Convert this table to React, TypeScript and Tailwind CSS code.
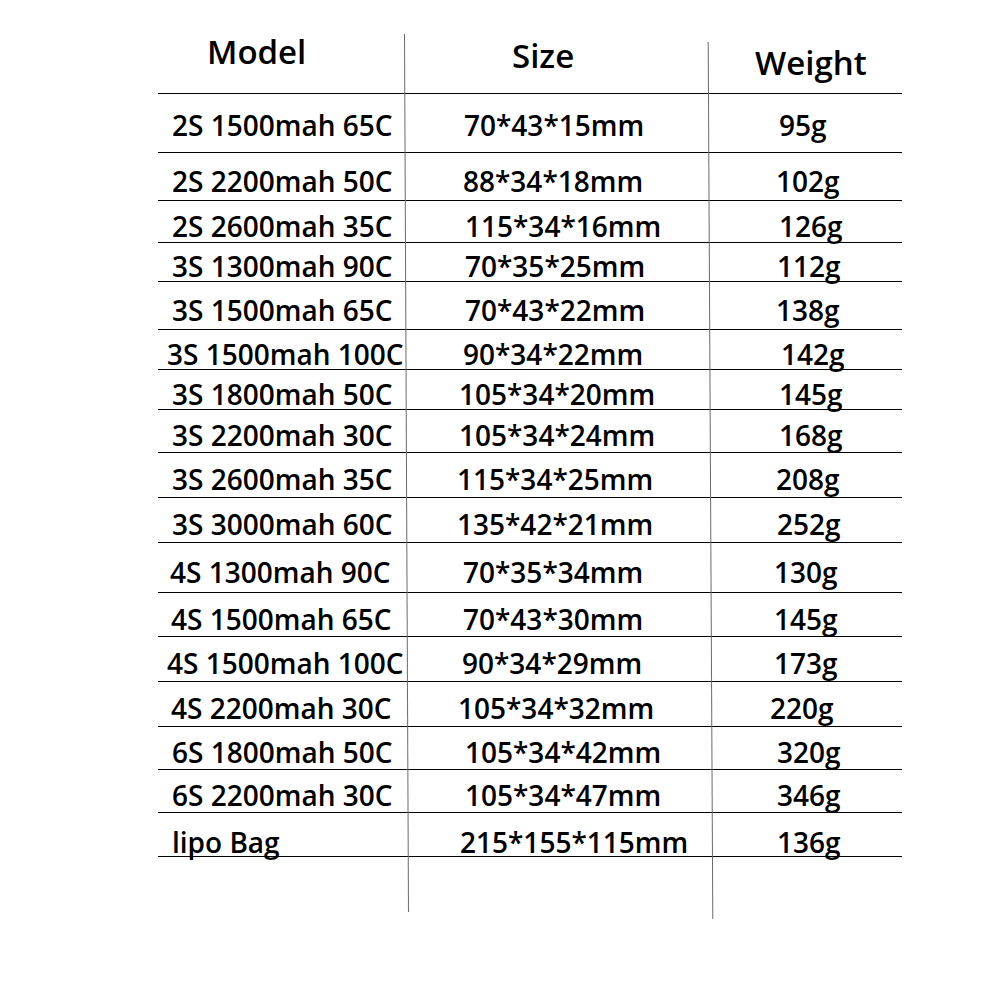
import React from 'react';

type Row = {
  model: string;
  size: string;
  weight: string;
  h: string;
  m?: string;
  s?: string;
  w?: string;
  y?: string;
};

// row heights follow the uneven ruling of the original sheet
const rows: Row[] = [
  { model: '2S 1500mah 65C', size: '70*43*15mm', weight: '95g', h: 'h-[59px]', s: 'pl-[58px]', w: 'pl-[69px]', y: 'pt-[4px]' },
  { model: '2S 2200mah 50C', size: '88*34*18mm', weight: '102g', h: 'h-[48px]', s: 'pl-[57px]', w: 'pl-[66px]' },
  { model: '2S 2600mah 35C', size: '115*34*16mm', weight: '126g', h: 'h-[42px]', s: 'pl-[59px]', w: 'pl-[69px]' },
  { model: '3S 1300mah 90C', size: '70*35*25mm', weight: '112g', h: 'h-[39px]', s: 'pl-[59px]', w: 'pl-[67px]' },
  { model: '3S 1500mah 65C', size: '70*43*22mm', weight: '138g', h: 'h-[48px]', s: 'pl-[59px]', w: 'pl-[66px]' },
  { model: '3S 1500mah 100C', size: '90*34*22mm', weight: '142g', h: 'h-[40px]', m: 'pl-[9px]', s: 'pl-[57px]', w: 'pl-[71px]' },
  { model: '3S 1800mah 50C', size: '105*34*20mm', weight: '145g', h: 'h-[40px]', s: 'pl-[53px]', w: 'pl-[69px]' },
  { model: '3S 2200mah 30C', size: '105*34*24mm', weight: '168g', h: 'h-[43px]', s: 'pl-[53px]', w: 'pl-[69px]' },
  { model: '3S 2600mah 35C', size: '115*34*25mm', weight: '208g', h: 'h-[45px]', s: 'pl-[51px]', w: 'pl-[66px]' },
  { model: '3S 3000mah 60C', size: '135*42*21mm', weight: '252g', h: 'h-[45px]', s: 'pl-[51px]', w: 'pl-[67px]' },
  { model: '4S 1300mah 90C', size: '70*35*34mm', weight: '130g', h: 'h-[50px]', m: 'pl-[12px]', s: 'pl-[57px]', w: 'pl-[64px]' },
  { model: '4S 1500mah 65C', size: '70*43*30mm', weight: '145g', h: 'h-[44px]', m: 'pl-[13px]', s: 'pl-[57px]', w: 'pl-[64px]' },
  { model: '4S 1500mah 100C', size: '90*34*29mm', weight: '173g', h: 'h-[45px]', m: 'pl-[9px]', s: 'pl-[56px]', w: 'pl-[64px]' },
  { model: '4S 2200mah 30C', size: '105*34*32mm', weight: '220g', h: 'h-[45px]', m: 'pl-[13px]', s: 'pl-[52px]', w: 'pl-[60px]' },
  { model: '6S 1800mah 50C', size: '105*34*42mm', weight: '320g', h: 'h-[43px]', s: 'pl-[59px]', w: 'pl-[67px]' },
  { model: '6S 2200mah 30C', size: '105*34*47mm', weight: '346g', h: 'h-[43px]', s: 'pl-[59px]', w: 'pl-[67px]' },
  { model: 'lipo Bag', size: '215*155*115mm', weight: '136g', h: 'h-[44px]', s: 'pl-[54px]', w: 'pl-[67px]', y: 'pt-[14px]' },
];

const App = () => {
  return (
    <div className="w-[1000px] h-[1000px] bg-white pt-[34px] text-black" style={{ fontFamily: '"Open Sans", "Noto Sans", sans-serif' }}>
      <div className="relative ml-[158px] w-[744px] h-[886px]">
        {/* column rules, slightly skewed like the scan */}
        <div className="absolute left-[248px] top-0 h-[878px] w-px bg-[#6b6b6b] -rotate-[0.26deg]" />
        <div className="absolute left-[552px] top-[8px] h-[877px] w-px bg-[#6b6b6b] -rotate-[0.3deg]" />

        <div className="grid grid-cols-[248px_304px_192px] h-[60px] border-b border-black text-[33px] font-semibold leading-none">
          <div className="pl-[49px] pt-[1px]">Model</div>
          <div className="pl-[106px] pt-[5px]">Size</div>
          <div className="pl-[45px] pt-[12px]">Weight</div>
        </div>

        {rows.map((r, i) => (
          <div key={i} className={`grid grid-cols-[248px_304px_192px] items-center border-b border-black text-[28px] font-semibold leading-none ${r.h} ${r.y ?? 'pt-[8px]'}`}>
            <div className={r.m ?? 'pl-[14px]'}>{r.model}</div>
            <div className={r.s}>{r.size}</div>
            <div className={r.w}>{r.weight}</div>
          </div>
        ))}
      </div>
    </div>
  );
};

export default App;
